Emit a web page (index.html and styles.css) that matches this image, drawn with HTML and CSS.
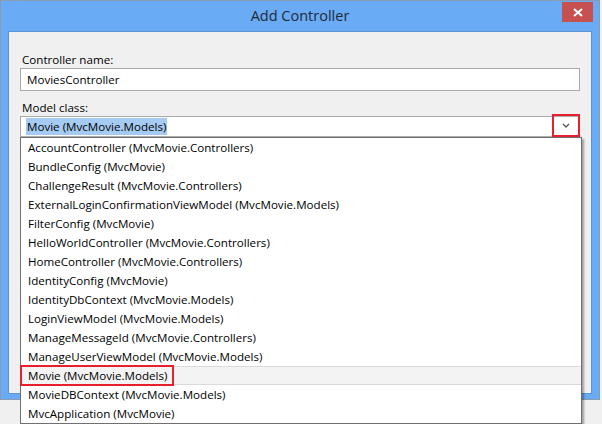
FILE: index.html
```html
<!DOCTYPE html>
<html lang="en">
<head>
    <meta charset="UTF-8">
    <title>Add Controller</title>
    <link rel="stylesheet" href="styles.css">
</head>
<body>
    <div class="window">
        <div class="titlebar">
            <span class="title">Add Controller</span>
            <span class="close-btn">
                <svg width="10" height="9" viewBox="0 0 10 9"><path d="M1 1 L9 8 M9 1 L1 8" stroke="#fff" stroke-width="2"/></svg>
            </span>
        </div>
        <div class="panel">
            <div class="label">Controller name:</div>
            <div class="textbox">MoviesController</div>
            <div class="label">Model class:</div>
            <div class="combo">
                <span class="combo-value">Movie (MvcMovie.Models)</span>
                <span class="combo-arrow">
                    <svg width="8" height="5" viewBox="0 0 8 5"><path d="M1 1 L4 4 L7 1" stroke="#555" stroke-width="1.3" fill="none"/></svg>
                </span>
                <ul class="dropdown">
                    <li>AccountController (MvcMovie.Controllers)</li>
                    <li>BundleConfig (MvcMovie)</li>
                    <li>ChallengeResult (MvcMovie.Controllers)</li>
                    <li>ExternalLoginConfirmationViewModel (MvcMovie.Models)</li>
                    <li>FilterConfig (MvcMovie)</li>
                    <li>HelloWorldController (MvcMovie.Controllers)</li>
                    <li>HomeController (MvcMovie.Controllers)</li>
                    <li>IdentityConfig (MvcMovie)</li>
                    <li>IdentityDbContext (MvcMovie.Models)</li>
                    <li>LoginViewModel (MvcMovie.Models)</li>
                    <li>ManageMessageId (MvcMovie.Controllers)</li>
                    <li>ManageUserViewModel (MvcMovie.Models)</li>
                    <li class="hover"><span class="mark">Movie (MvcMovie.Models)</span></li>
                    <li>MovieDBContext (MvcMovie.Models)</li>
                    <li>MvcApplication (MvcMovie)</li>
                </ul>
            </div>
        </div>
    </div>
</body>
</html>
```

FILE: styles.css
```css
body {
    margin: 0;
    background-color: #f0f0f0;
    font-family: 'Open Sans', 'Noto Sans', sans-serif;
    font-size: 11.6px;
    color: #000;
    overflow: hidden;
    height: 424px;
}

.window {
    width: 600px;
    height: 400px;
    background: #6aabf5;
    border: 1px solid #8a9bb3;
    padding: 0 7px 5px 7px;
    box-sizing: border-box;
    display: flex;
    flex-direction: column;
}

.titlebar {
    height: 30px;
    flex: none;
    display: flex;
    justify-content: center;
    align-items: center;
    position: relative;
}

.title {
    font-size: 14.5px;
    color: #1e2a38;
    margin-bottom: 2px;
}

.close-btn {
    position: absolute;
    right: -1px;
    top: 1px;
    width: 31px;
    height: 20px;
    background: #c75050;
    display: flex;
    align-items: center;
    justify-content: center;
}

.panel {
    flex: 1;
    background: #f0f0f0;
    border: 1px solid #5a93d6;
    padding: 19px 11px 0 11px;
}

.label {
    height: 17px;
    line-height: 17px;
    padding-left: 2px;
}

.textbox {
    height: 21px;
    line-height: 21px;
    background: #fff;
    border: 1px solid #ababab;
    padding-left: 6px;
    margin-bottom: 8px;
}

.combo {
    position: relative;
    height: 19px;
    background: #fff;
    border: 1px solid #ababab;
    display: flex;
    align-items: center;
}

.combo-value {
    margin-left: 5px;
    background: #a5cbf2;
    padding: 0 1px;
    line-height: 17px;
}

.combo-arrow {
    position: absolute;
    right: -1px;
    top: -3px;
    width: 24px;
    height: 19px;
    border: 2px solid #e8202e;
    display: flex;
    align-items: center;
    justify-content: center;
}

.dropdown {
    position: absolute;
    left: -1px;
    top: 20px;
    width: 560px;
    margin: 0;
    padding: 0;
    list-style: none;
    background: #fff;
    border: 1px solid #707070;
    box-shadow: 2px 2px 2px rgba(0, 0, 0, 0.35);
}

.dropdown li {
    height: 19px;
    line-height: 19px;
    padding-left: 7px;
    white-space: nowrap;
    position: relative;
}

.dropdown li.hover {
    background: #f3f3f3;
    border-top: 1px solid #dadada;
    border-bottom: 1px solid #dadada;
    height: 17px;
    line-height: 17px;
}

.mark {
    position: relative;
}

.mark::after {
    content: "";
    position: absolute;
    left: -8px;
    right: -7px;
    top: -3px;
    bottom: -3px;
    border: 2px solid #e8202e;
}
```
